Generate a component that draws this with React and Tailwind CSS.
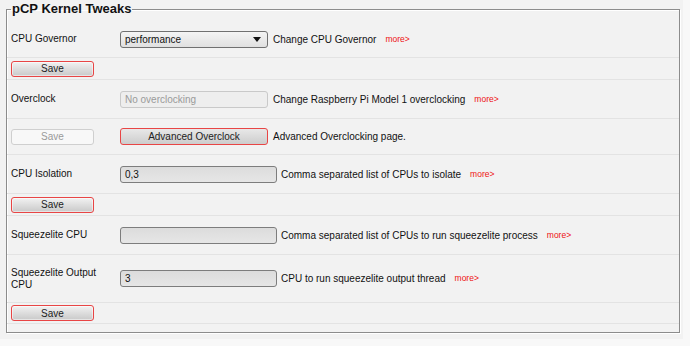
import React from "react";

const font = "font-['Liberation_Sans',Arial,sans-serif]";

function More() {
  return <span className="ml-[9px] text-[8.5px] text-[#ee1111]">more&gt;</span>;
}

function SaveBtn({ disabled }) {
  return disabled ? (
    <div className="flex h-[16px] w-[83px] items-center justify-center rounded-[3px] border border-[#cfcfcf] bg-[#f8f8f8] text-[10px] text-[#9a9a9a]">
      Save
    </div>
  ) : (
    <div className="flex h-[16px] w-[83px] items-center justify-center rounded-[3px] border border-[#e84545] bg-linear-to-b from-[#f2f2f2] to-[#c9c9c9] text-[10px] text-[#222] shadow-[inset_0_0_0_1px_rgba(255,255,255,0.5)]">
      Save
    </div>
  );
}

function TextBox({ value, width, disabled }) {
  return (
    <div
      className={
        disabled
          ? `flex h-[17px] ${width} items-center rounded-[3px] border border-[#c9c9c9] bg-[#eeeeee] pl-[4px] text-[10px] text-[#9a9a9a]`
          : `flex h-[17px] ${width} items-center rounded-[3px] border border-[#7d7d7d] bg-linear-to-b from-[#dcdcdc] to-[#e6e6e6] pl-[4px] text-[10px] text-[#111]`
      }
    >
      {value}
    </div>
  );
}

function Row({ h, children }) {
  return (
    <div className={`flex ${h} items-center border-b border-[#e3e3e3] pl-[4px]`}>
      {children}
    </div>
  );
}

function Label({ children }) {
  return <div className="w-[109px] shrink-0 pr-[10px] text-[10px] leading-[12px] text-[#111]">{children}</div>;
}

function Desc({ children, ml = "ml-[5px]" }) {
  return <div className={`${ml} text-[10px] text-[#111] whitespace-nowrap`}>{children}</div>;
}

export default function App() {
  return (
    <div className={`min-h-[346px] w-[690px] bg-[#f8f8f8] ${font}`}>
      <div className="h-[339px] w-[683px] bg-[#f2f2f2] pl-[6px] pt-[1px]">
        <fieldset className="w-[674px] border border-[#8c8c8c] pb-[8px] pt-[4px] shadow-[1px_1px_0_#ffffff,inset_1px_1px_0_#ffffff]">
          <legend className="ml-[4px] px-[1px] text-[13px] font-bold leading-[16px] text-[#111]">pCP Kernel Tweaks</legend>

          <Row h="h-[37px]">
            <Label>CPU Governor</Label>
            <div className="flex h-[17px] w-[148px] items-center justify-between rounded-[3px] border border-[#707070] bg-linear-to-b from-[#f4f4f4] to-[#e0e0e0] pl-[4px] pr-[6px] text-[10px] text-[#111]">
              <span>performance</span>
              <svg width="8" height="5" viewBox="0 0 8 5">
                <path d="M0 0 H8 L4 5 Z" fill="#111" />
              </svg>
            </div>
            <Desc>Change CPU Governor</Desc>
            <More />
          </Row>

          <Row h="h-[22px]">
            <SaveBtn />
          </Row>

          <Row h="h-[39px]">
            <Label>Overclock</Label>
            <TextBox value="No overclocking" width="w-[148px]" disabled />
            <Desc>Change Raspberry Pi Model 1 overclocking</Desc>
            <More />
          </Row>

          <Row h="h-[36px]">
            <div className="w-[109px] shrink-0">
              <SaveBtn disabled />
            </div>
            <div className="flex h-[17px] w-[148px] items-center justify-center rounded-[3px] border border-[#e84545] bg-linear-to-b from-[#e8e8e8] to-[#cdcdcd] text-[10px] text-[#222]">
              Advanced Overclock
            </div>
            <Desc>Advanced Overclocking page.</Desc>
          </Row>

          <Row h="h-[39px]">
            <Label>CPU Isolation</Label>
            <TextBox value="0,3" width="w-[157px]" />
            <Desc ml="ml-[4px]">Comma separated list of CPUs to isolate</Desc>
            <More />
          </Row>

          <Row h="h-[22px]">
            <SaveBtn />
          </Row>

          <Row h="h-[39px]">
            <Label>Squeezelite CPU</Label>
            <TextBox value="" width="w-[157px]" />
            <Desc ml="ml-[4px]">Comma separated list of CPUs to run squeezelite process</Desc>
            <More />
          </Row>

          <Row h="h-[48px]">
            <Label>Squeezelite Output CPU</Label>
            <TextBox value="3" width="w-[157px]" />
            <Desc ml="ml-[4px]">CPU to run squeezelite output thread</Desc>
            <More />
          </Row>

          <Row h="h-[21px]">
            <SaveBtn />
          </Row>
        </fieldset>
      </div>
    </div>
  );
}
